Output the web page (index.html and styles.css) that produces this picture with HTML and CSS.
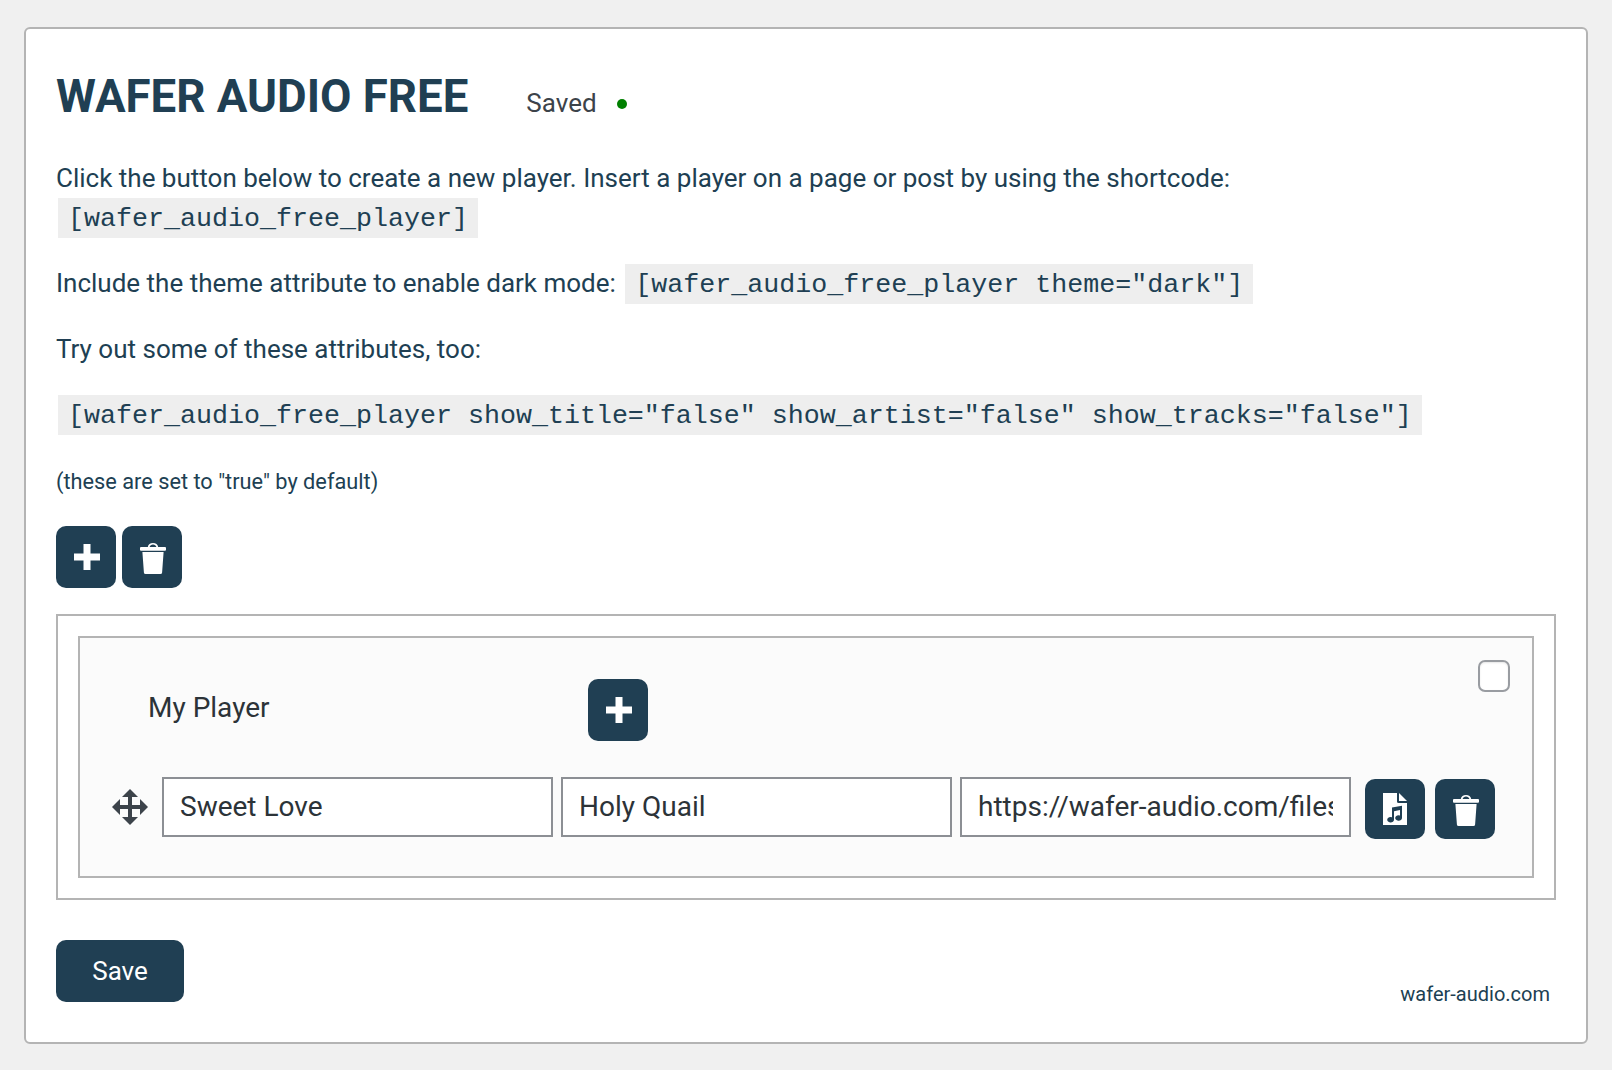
FILE: index.html
```html
<!DOCTYPE html>
<html lang="en">
<head>
<meta charset="utf-8">
<title>Wafer Audio Free</title>
<link rel="stylesheet" href="styles.css">
</head>
<body>
<main class="card">
  <header class="head">
    <h1 class="title">WAFER AUDIO FREE</h1>
    <span class="saved">Saved</span>
    <span class="dot"></span>
  </header>
  <p class="para first">Click the button below to create a new player. Insert a player on a page or post by using the shortcode:<br><code class="code">[wafer_audio_free_player]</code></p>
  <p class="para tight">Include the theme attribute to enable dark mode: <code class="code">[wafer_audio_free_player theme="dark"]</code></p>
  <p class="para">Try out some of these attributes, too:</p>
  <p class="para"><code class="code">[wafer_audio_free_player show_title="false" show_artist="false" show_tracks="false"]</code></p>
  <p class="note">(these are set to "true" by default)</p>
  <div class="actions">
    <button class="btn" type="button" aria-label="Add player"><svg class="ic-plus" viewBox="0 0 26 26"><path d="M9.500 0h7v9.500H26v7h-9.500V26h-7v-9.500H0v-7h9.500z"/></svg></button>
    <button class="btn" type="button" aria-label="Delete player"><svg class="ic-trash" viewBox="0 0 26 31"><path fill-rule="evenodd" d="M7.800 4C8.200 1.500 10.200 0 13 0s4.800 1.500 5.200 4H25a1 1 0 0 1 1 1v1.700a1 1 0 0 1-1 1H1a1 1 0 0 1-1-1V5a1 1 0 0 1 1-1zM9.600 4h6.800C16 2.500 14.700 1.500 13 1.500S10 2.500 9.600 4zM2.400 9h21.200l-1.500 20.400A1.700 1.700 0 0 1 20.400 31H5.600a1.700 1.700 0 0 1-1.700-1.600z"/></svg></button>
  </div>
  <section class="players">
    <article class="player">
      <input class="check" type="checkbox" aria-label="Select player">
      <div class="player-head">
        <span class="player-name">My Player</span>
        <button class="btn" type="button" aria-label="Add track"><svg class="ic-plus" viewBox="0 0 26 26"><path d="M9.500 0h7v9.500H26v7h-9.500V26h-7v-9.500H0v-7h9.500z"/></svg></button>
      </div>
      <div class="track">
        <svg class="ic-move" viewBox="0 0 36 36"><path d="M18 0l8 8h-6v8h8v-6l8 8-8 8v-6h-8v8h6l-8 8-8-8h6v-8H8v6l-8-8 8-8v6h8V8h-6z"/></svg>
        <input class="field" type="text" value="Sweet Love" aria-label="Title">
        <input class="field" type="text" value="Holy Quail" aria-label="Artist">
        <input class="field" type="text" value="https://wafer-audio.com/files/sweet-love.mp3" aria-label="File URL">
        <div class="track-btns">
          <button class="btn" type="button" aria-label="Choose file"><svg class="ic-file" viewBox="0 0 24 32"><path fill-rule="evenodd" d="M0 0h14v8.500A1.500 1.500 0 0 0 15.500 10H24v22H0zM16 0l8 8h-8zM9 14.500v9.800a3.400 2.700 0 1 0 2 2.300v-8.300l6-1.300v5.500a3.400 2.700 0 1 0 2 2.300V12.700z"/></svg></button>
          <button class="btn" type="button" aria-label="Delete track"><svg class="ic-trash" viewBox="0 0 26 31"><path fill-rule="evenodd" d="M7.800 4C8.200 1.500 10.200 0 13 0s4.800 1.500 5.200 4H25a1 1 0 0 1 1 1v1.700a1 1 0 0 1-1 1H1a1 1 0 0 1-1-1V5a1 1 0 0 1 1-1zM9.600 4h6.800C16 2.500 14.700 1.500 13 1.500S10 2.500 9.600 4zM2.400 9h21.200l-1.500 20.400A1.700 1.700 0 0 1 20.400 31H5.600a1.700 1.700 0 0 1-1.700-1.600z"/></svg></button>
        </div>
      </div>
    </article>
  </section>
  <footer class="foot">
    <button class="btn btn-save" type="button">Save</button>
    <a class="site" href="#">wafer-audio.com</a>
  </footer>
</main>
</body>
</html>
```
FILE: styles.css
```css
* { box-sizing: border-box; }
html, body { margin: 0; }
body {
  background: #f0f0f0;
  padding: 27px 24px 26px 24px;
  font-family: Roboto, "Liberation Sans", sans-serif;
  color: #203f53;
}
.card {
  height: 1017px;
  background: #fff;
  border: 2px solid #b4b4b4;
  border-radius: 6px;
  padding: 0 30px;
}
.head { display: flex; align-items: center; height: 96px; padding-top: 39px; }
.title { margin: 0; font-size: 45.6px; line-height: 54px; font-weight: 700; color: #203f53; }
.saved { margin: 12px 0 0 58px; font-size: 26px; color: #3c434a; }
.dot { width: 10px; height: 10px; margin: 14px 0 0 20px; border-radius: 50%; background: #008000; }
.para { margin: 0 0 26px; font-size: 26px; line-height: 39px; color: #203f53; }
.para.first { margin-top: 34px; margin-bottom: 25px; }
.para.tight { margin-bottom: 25px; }
.code {
  margin: 0 2px;
  padding: 6px 10px 4px;
  background: #eeeeee;
  font-family: "Liberation Mono", monospace;
  font-size: 26.67px;
}
.para.tight .code { margin-left: 3px; }
.note { margin: 31px 0 0; font-size: 21.76px; line-height: 30px; }
.actions { display: flex; gap: 6px; margin-top: 29px; }
.btn {
  display: flex;
  align-items: center;
  justify-content: center;
  width: 60px;
  height: 62px;
  padding: 0;
  border: 0;
  border-radius: 10px;
  background: #203f53;
  color: #fff;
  fill: #fff;
}
.ic-plus { width: 26px; height: 26px; margin-left: 2px; }
.ic-trash { width: 26px; height: 31px; margin: 2px 0 0 2px; }
.ic-file { width: 24px; height: 32px; }
.ic-move { width: 36px; height: 36px; fill: #3c434a; }
.players { height: 286px; margin-top: 26px; border: 2px solid #b4b4b4; padding: 20px; }
.player { position: relative; height: 242px; border: 2px solid #b4b4b4; background: #fbfbfb; padding: 41px 0 0 32px; }
.check {
  position: absolute;
  top: 22px;
  right: 22px;
  width: 32px;
  height: 32px;
  margin: 0;
  appearance: none;
  background: #fff;
  border: 2px solid #999ca1;
  border-radius: 7px;
  box-shadow: inset 0 1px 2px rgba(0, 0, 0, .1);
}
.player-head { display: flex; align-items: center; }
.player-name { width: 476px; padding-left: 36px; margin-bottom: 6px; font-size: 28px; color: #2c3338; }
.track { display: flex; align-items: flex-start; gap: 8px; margin-top: 36px; }
.ic-move { margin: 12px 6px 0 0; }
.field {
  width: 391px;
  height: 60px;
  padding: 0 16px 1px;
  background: #fff;
  border: 2px solid #8c8f94;
  border-radius: 0;
  font-family: Roboto, sans-serif;
  font-size: 28px;
  color: #2c3338;
}
.track-btns { display: flex; gap: 10px; margin: 2px 0 0 6px; }
.track-btns .btn { height: 60px; }
.foot { display: flex; justify-content: space-between; align-items: flex-end; margin-top: 40px; }
.btn-save { width: 128px; font-family: Roboto, sans-serif; font-size: 26px; }
.site { margin-right: 6px; margin-bottom: -4px; font-size: 20px; color: #203f53; text-decoration: none; }
```
